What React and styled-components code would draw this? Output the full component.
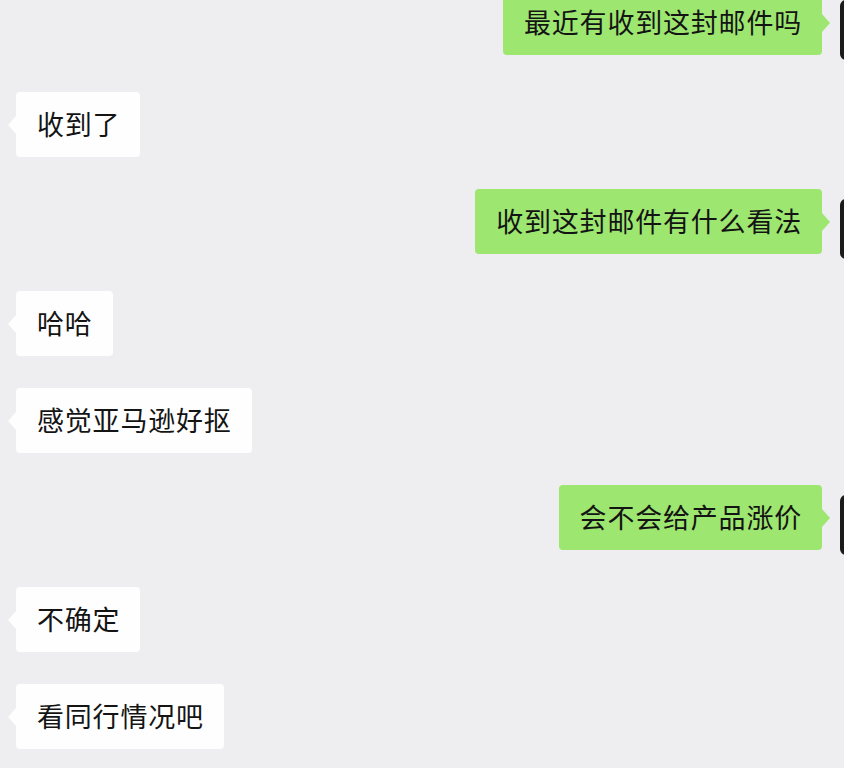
import styled, { createGlobalStyle } from 'styled-components'

const GlobalStyle = createGlobalStyle`
  html, body {
    margin: 0;
    padding: 0;
    background: #eeedf0;
  }
  body {
    font-family: "Noto Sans CJK SC", "Noto Sans", sans-serif;
  }
`

const colors = {
  page: '#eeedf0',
  mine: '#9de670',
  theirs: '#fefefe',
  text: '#141414',
  avatar: '#1b1b1b',
}

const ChatWindow = styled.div`
  width: 844px;
  height: 768px;
  overflow: hidden;
  background: ${colors.page};
`

const MessageList = styled.div`
  display: flex;
  flex-direction: column;
  gap: 32px;
  margin-top: -10px;
`

const MessageRow = styled.div`
  display: flex;
  align-items: flex-start;
  justify-content: ${({ $mine }) => ($mine ? 'flex-end' : 'flex-start')};
  padding-left: ${({ $mine }) => ($mine ? '0' : '16px')};
  margin-right: ${({ $mine }) => ($mine ? '-56px' : '0')};
`

const Bubble = styled.div`
  position: relative;
  box-sizing: border-box;
  height: 65px;
  padding: 14px 20px 15px 21px;
  border-radius: 4px;
  background: ${({ $mine }) => ($mine ? colors.mine : colors.theirs)};
  color: ${colors.text};
  font-size: 27px;
  line-height: 36px;
  letter-spacing: 0.8px;
  white-space: nowrap;

  &::after {
    content: '';
    position: absolute;
    top: 24px;
    width: 0;
    height: 0;
    border-top: 9px solid transparent;
    border-bottom: 9px solid transparent;
    ${({ $mine }) =>
      $mine
        ? `right: -8px; border-left: 8px solid ${colors.mine};`
        : `left: -8px; border-right: 8px solid ${colors.theirs};`}
  }
`

const Avatar = styled.div`
  flex-shrink: 0;
  width: 60px;
  height: 60px;
  margin-top: 10px;
  margin-left: 18px;
  border-radius: 6px;
  background: ${colors.avatar};
`

const messages = [
  { mine: true, text: '最近有收到这封邮件吗' },
  { mine: false, text: '收到了' },
  { mine: true, text: '收到这封邮件有什么看法' },
  { mine: false, text: '哈哈' },
  { mine: false, text: '感觉亚马逊好抠' },
  { mine: true, text: '会不会给产品涨价' },
  { mine: false, text: '不确定' },
  { mine: false, text: '看同行情况吧' },
]

function App() {
  return (
    <ChatWindow>
      <GlobalStyle />
      <MessageList>
        {messages.map((message, index) => (
          <MessageRow key={`msg-${index}`} $mine={message.mine}>
            <Bubble $mine={message.mine}>{message.text}</Bubble>
            {message.mine && <Avatar />}
          </MessageRow>
        ))}
      </MessageList>
    </ChatWindow>
  )
}

export default App
